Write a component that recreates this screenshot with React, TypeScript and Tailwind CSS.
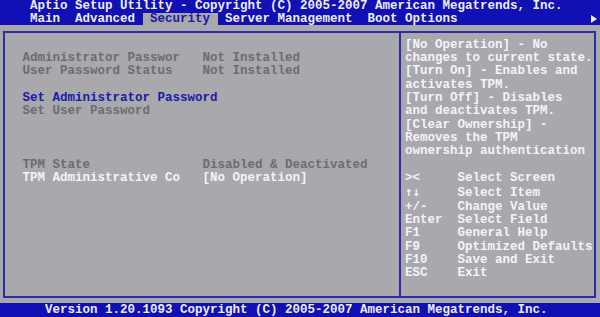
export default function App() {
  const help = [
    "[No Operation] - No",
    "changes to current state.",
    "[Turn On] - Enables and",
    "activates TPM.",
    "[Turn Off] - Disables",
    "and deactivates TPM.",
    "[Clear Ownership] -",
    "Removes the TPM",
    "ownership authentication",
  ];
  const keys: [string, string][] = [
    ["><", "Select Screen"],
    ["↑↓", "Select Item"],
    ["+/-", "Change Value"],
    ["Enter", "Select Field"],
    ["F1", "General Help"],
    ["F9", "Optimized Defaults"],
    ["F10", "Save and Exit"],
    ["ESC", "Exit"],
  ];

  return (
    <div
      className="w-[600px] h-[317px] overflow-hidden bg-[#a9a8ac] flex flex-col text-[12.5px] font-bold whitespace-pre"
      style={{ fontFamily: '"Liberation Mono", "DejaVu Sans Mono", monospace' }}
    >
      {/* Header */}
      <div className="h-[25px] bg-[#1010b4] text-[#eeeef6]">
        <div className="h-[12.5px] leading-[12.5px]">
          {"    Aptio Setup Utility - Copyright (C) 2005-2007 American Megatrends, Inc."}
        </div>
        <div className="h-[12.5px] leading-[12.5px] flex items-center">
          <span>{"    Main  Advanced "}</span>
          <span className="bg-[#a9a8ac] text-[#1a1aa8]">{" Security "}</span>
          <span>{" Server Management  Boot Options"}</span>
          <span className="flex-1" />
          <svg width="6" height="8" viewBox="0 0 6 8" className="mr-[3px]">
            <path d="M0 0 L6 4 L0 8 Z" fill="#eeeef6" />
          </svg>
        </div>
      </div>

      {/* Body */}
      <div className="flex-1 pt-[6px] pl-[3px] pr-[4px] pb-[5px]">
        <div className="h-full border-2 border-[#2c2ca6] flex">
          <div className="w-[394px] pt-[5.5px] pl-[17.5px] leading-[13.35px] text-[#6c6c70]">
            <div className="h-[13.35px]" />
            <div>{"Administrator Passwor   Not Installed"}</div>
            <div>{"User Password Status    Not Installed"}</div>
            <div className="h-[13.35px]" />
            <div className="text-[#1a1aa8]">Set Administrator Password</div>
            <div>Set User Password</div>
            <div className="h-[40.05px]" />
            <div>{"TPM State               Disabled & Deactivated"}</div>
            <div className="text-[#f4f4f8]">{"TPM Administrative Co   [No Operation]"}</div>
          </div>
          <div className="w-[2px] bg-[#2c2ca6]" />
          <div className="flex-1 pt-[5.5px] pl-[4px] leading-[13.35px] text-[#f4f4f8]">
            {help.map((l) => (
              <div key={l}>{l}</div>
            ))}
            <div className="h-[13.35px]" />
            {keys.map(([k, d]) => (
              <div key={k}>
                <span
                  className="inline-block w-[52.5px]"
                  style={k === "↑↓" ? { fontFamily: '"DejaVu Sans Mono", monospace' } : undefined}
                >
                  {k}
                </span>
                {d}
              </div>
            ))}
          </div>
        </div>
      </div>

      {/* Footer */}
      <div className="h-[14px] bg-[#1010b4] text-[#eeeef6] leading-[14px]">
        {"      Version 1.20.1093 Copyright (C) 2005-2007 American Megatrends, Inc."}
      </div>
    </div>
  );
}
